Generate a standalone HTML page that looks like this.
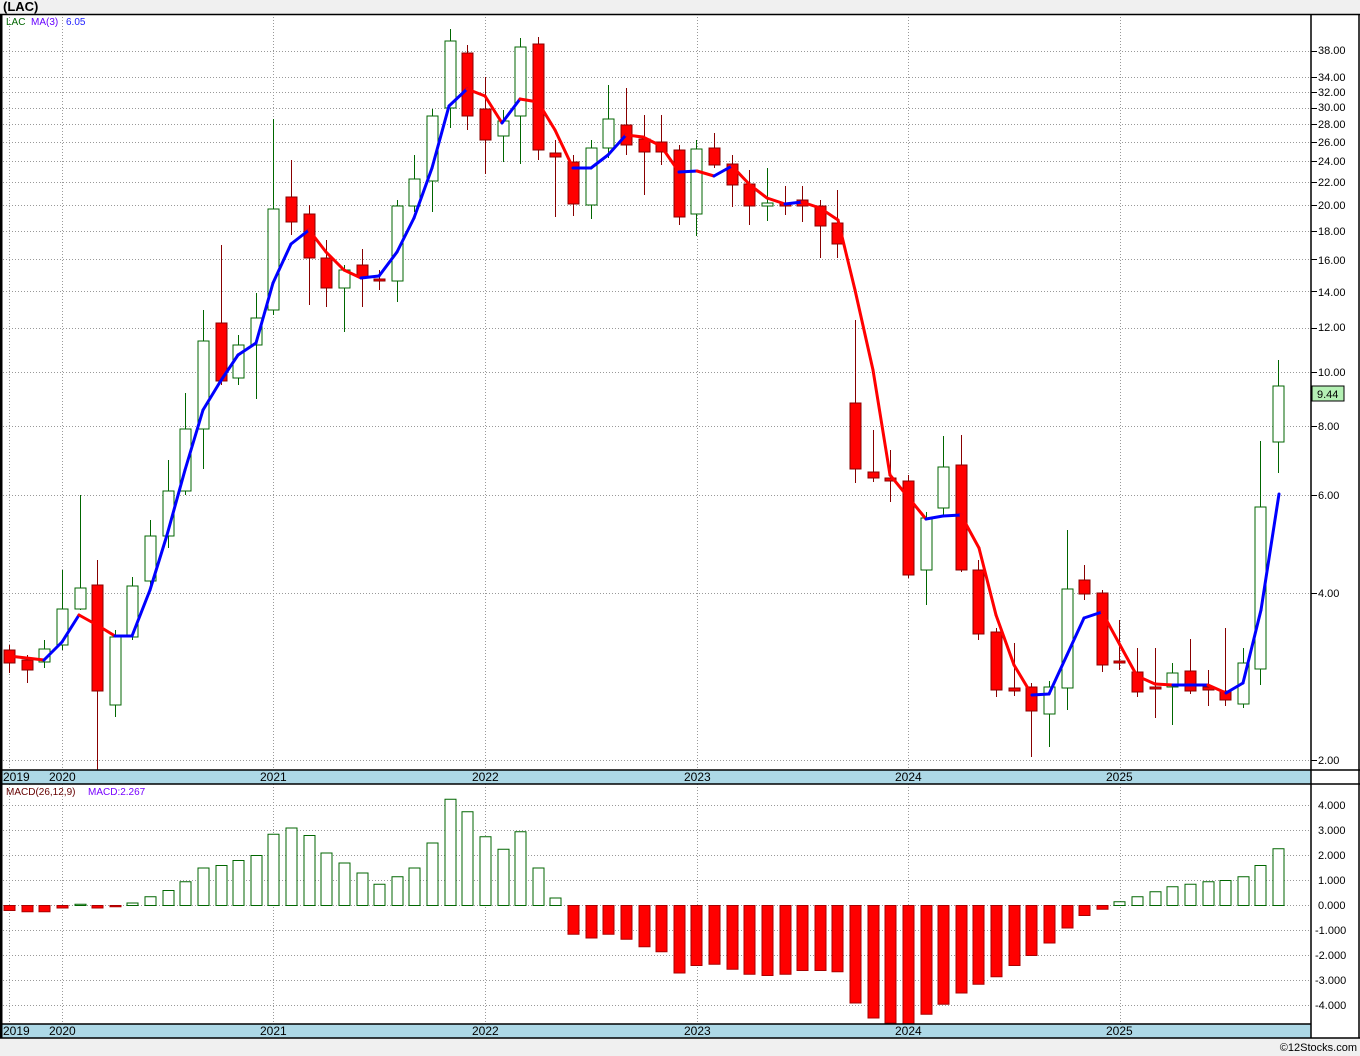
<!DOCTYPE html>
<html><head><meta charset="utf-8"><style>
html,body{margin:0;padding:0;background:#f0f0f0;}
svg{display:block;font-family:"Liberation Sans",sans-serif;}
</style></head><body>
<svg id="s" width="1360" height="1056" xmlns="http://www.w3.org/2000/svg">
<rect x="0" y="0" width="1360" height="1056" fill="#f0f0f0"/>
<rect x="0" y="14" width="1360" height="1024" fill="#fff"/>
<text x="3" y="11" font-size="13" font-weight="bold">(LAC)</text>
<g id="grid" stroke="#999" stroke-dasharray="1,2" stroke-width="1"></g>
<g id="bars"></g>
<!-- axis strips -->
<rect x="0" y="770" width="1311" height="14" fill="#add8e6"/>
<rect x="0" y="1024" width="1311" height="14" fill="#add8e6"/>
<g stroke="#000" stroke-width="1.5">
<line x1="0" y1="14.5" x2="1360" y2="14.5"/>
<line x1="0" y1="770" x2="1360" y2="770"/>
<line x1="0" y1="784" x2="1360" y2="784"/>
<line x1="0" y1="1024" x2="1311" y2="1024"/>
<line x1="0" y1="1038" x2="1360" y2="1038"/>
<line x1="1311" y1="14" x2="1311" y2="1038"/>
<line x1="1" y1="14" x2="1" y2="1038" stroke-width="3"/>
<line x1="1359" y1="14" x2="1359" y2="1038"/>
</g>
<g font-size="12" fill="#000">
<text x="3" y="781">2019</text><text x="49" y="781">2020</text><text x="260" y="781">2021</text><text x="472" y="781">2022</text><text x="684" y="781">2023</text><text x="895" y="781">2024</text><text x="1106" y="781">2025</text>
<text x="3" y="1035">2019</text><text x="49" y="1035">2020</text><text x="260" y="1035">2021</text><text x="472" y="1035">2022</text><text x="684" y="1035">2023</text><text x="895" y="1035">2024</text><text x="1106" y="1035">2025</text>
</g>
<text x="6" y="25" font-size="10" fill="#060">LAC</text>
<text x="31" y="25" font-size="10" fill="#60f">MA(3)</text>
<text x="66" y="25" font-size="10" fill="#22f">6.05</text>
<text x="6" y="795" font-size="10" fill="#600">MACD(26,12,9)</text>
<text x="88" y="795" font-size="10" fill="#70f">MACD:2.267</text>
<g id="plabels" font-size="11" fill="#000"></g>
<rect x="1312" y="386" width="32" height="15" fill="#b4f0b4" stroke="#000"/>
<text x="1317" y="398" font-size="11">9.44</text>
<text x="1357" y="1051" font-size="11" text-anchor="end">©12Stocks.com</text>
<g font-size="11" fill="#000">
<text x="1318" y="54">38.00</text><text x="1318" y="81">34.00</text><text x="1318" y="96">32.00</text><text x="1318" y="111">30.00</text><text x="1318" y="128">28.00</text><text x="1318" y="146">26.00</text><text x="1318" y="165">24.00</text><text x="1318" y="186">22.00</text><text x="1318" y="209">20.00</text><text x="1318" y="235">18.00</text><text x="1318" y="264">16.00</text><text x="1318" y="296">14.00</text><text x="1318" y="331">12.00</text><text x="1318" y="376">10.00</text><text x="1318" y="430">8.00</text><text x="1318" y="499">6.00</text><text x="1318" y="597">4.00</text><text x="1318" y="764">2.00</text>
<text x="1318" y="809">4.000</text><text x="1318" y="834">3.000</text><text x="1318" y="859">2.000</text><text x="1318" y="884">1.000</text><text x="1318" y="909">0.000</text><text x="1315" y="934">-1.000</text><text x="1315" y="959">-2.000</text><text x="1315" y="984">-3.000</text><text x="1315" y="1009">-4.000</text>
</g>
</svg>
<script>
var NS="http://www.w3.org/2000/svg";
function el(p,t,a){var e=document.createElementNS(NS,t);for(var k in a)e.setAttribute(k,a[k]);p.appendChild(e);return e;}
var g=document.getElementById('grid'),b=document.getElementById('bars');
function py(p){return 760-167*Math.log2(p/2);}
[38,34,32,30,28,26,24,22,20,18,16,14,12,10,8,6,4,2].forEach(function(p){var y=Math.round(py(p))+.5;el(g,'line',{x1:0,y1:y,x2:1311,y2:y});el(document.getElementById('s'),'line',{x1:1311,y1:y,x2:1317,y2:y,stroke:'#000'});});
for(var v=-4;v<=4;v++){var y=905-25*v+.5;el(g,'line',{x1:0,y1:y,x2:1311,y2:y});}
[9,62,273,485,697,908,1120].forEach(function(x){el(g,'line',{x1:x+.5,y1:14,x2:x+.5,y2:770});el(g,'line',{x1:x+.5,y1:784,x2:x+.5,y2:1024});});
var C=[
['r',650,663,645,673],['r',660,670,655,683],['g',649,662,640,668],['g',609,645,570,650],['g',588,609,495,610],['r',585,691,560,770],['g',637,705,630,717],['g',586,637,577,640],['g',536,581,520,585],['g',491,536,460,548],['g',429,491,393,495],['g',341,429,310,469],['r',323,381,245,385],['g',345,378,335,385],['g',318,345,293,399],['g',209,310,119,315],['r',197,222,160,235],['r',214,258,205,305],['r',258,288,240,307],['g',270,288,265,332],['r',265,277,249,307],['r',279,281,270,290],['g',206,281,200,302],['g',179,206,155,212],['g',116,181,109,212],['g',41,108,29,128],['r',53,116,45,130],['r',109,140,77,174],['g',121,136,110,162],['g',47,116,38,164],['r',44,150,37,160],['r',153,157,140,217],['r',162,204,155,216],['g',148,205,140,219],['g',119,148,85,158],['r',125,145,88,155],['r',139,152,115,195],['r',142,152,115,165],['r',150,217,145,225],['g',149,214,140,236],['r',148,165,133,168],['r',164,185,155,207],['r',184,206,170,225],['g',203,206,168,221],['r',204,206,186,215],['r',200,206,186,222],['r',206,226,200,258],['r',223,244,190,258],['r',403,469,320,483],['r',472,478,430,482],['r',478,481,450,502],['r',481,575,475,578],['g',518,570,512,605],['g',467,508,436,515],['r',465,570,435,572],['r',570,634,560,640],['r',632,690,628,697],['r',688,691,643,696],['r',687,711,683,757],['g',687,714,681,747],['g',589,688,530,710],['r',580,594,565,600],['r',593,665,590,672],['r',661,663,620,670],['r',672,692,648,697],['r',687,689,648,718],['g',673,687,663,725],['r',671,691,639,694],['r',687,690,670,706],['r',691,700,628,706],['g',663,704,648,708],['g',507,669,441,685],['g',386,442,360,473]];
var M=[-0.2,-0.25,-0.25,-0.1,0.05,-0.1,-0.05,0.1,0.35,0.6,0.95,1.5,1.6,1.8,2.0,2.85,3.1,2.8,2.1,1.7,1.3,0.85,1.15,1.5,2.5,4.25,3.75,2.75,2.25,2.95,1.5,0.3,-1.15,-1.3,-1.15,-1.35,-1.65,-1.85,-2.7,-2.4,-2.35,-2.55,-2.75,-2.8,-2.75,-2.6,-2.6,-2.65,-3.9,-4.5,-4.7,-4.75,-4.35,-3.95,-3.5,-3.15,-2.85,-2.4,-2.0,-1.5,-0.9,-0.4,-0.15,0.15,0.35,0.55,0.75,0.85,0.95,1.0,1.15,1.6,2.27];
C.forEach(function(c,i){var x=Math.round(9+17.625*i)+.5;var red=c[0]=='r';var col=red?'#800':'#060';
el(b,'line',{x1:x,y1:c[3],x2:x,y2:c[4],stroke:col,'stroke-width':1});
var h=Math.max(c[2]-c[1],2);el(b,'rect',{x:x-5.5,y:c[1],width:11,height:h,fill:red?'#f00':'#fff',stroke:red?'#800':'#060'});
var m=M[i],y0=905,y1=905-25*m;el(b,'rect',{x:x-5.5,y:Math.min(y0,y1)+.5,width:11,height:Math.max(Math.abs(y1-y0),1),fill:m<0?'#f00':'#fff',stroke:m<0?'#a00':'#060'});});
var L=[[22,663],[44,660],[62,642],[79,615],[97,625],[115,636],[132,636],[150,590],[167,535],[185,470],[203,410],[220,382],[238,355],[256,343],[273,283],[291,244],[309,230],[326,252],[344,270],[361,278],[379,276],[397,252],[414,218],[432,168],[449,106],[467,89],[485,96],[502,123],[520,99],[538,102],[555,130],[573,168],[591,168],[608,155],[626,135],[643,137],[661,146],[679,172],[697,171],[714,176],[732,166],[750,185],[767,198],[785,204],[802,202],[820,208],[838,220],[855,290],[873,370],[890,475],[908,497],[926,519],[943,516],[961,515],[979,548],[996,615],[1014,665],[1032,695],[1049,694],[1067,655],[1084,618],[1102,612],[1120,645],[1137,676],[1155,684],[1173,685],[1190,685],[1208,685],[1226,693],[1243,683],[1261,610],[1279,494]];
L[0]=[9,656];
for(var i=1;i<L.length;i++){var a=L[i-1],c=L[i];el(b,'line',{x1:a[0],y1:a[1],x2:c[0],y2:c[1],stroke:c[1]<=a[1]?'#00f':'#f00','stroke-width':3,'stroke-linecap':'round'});}
</script>
</body></html>
